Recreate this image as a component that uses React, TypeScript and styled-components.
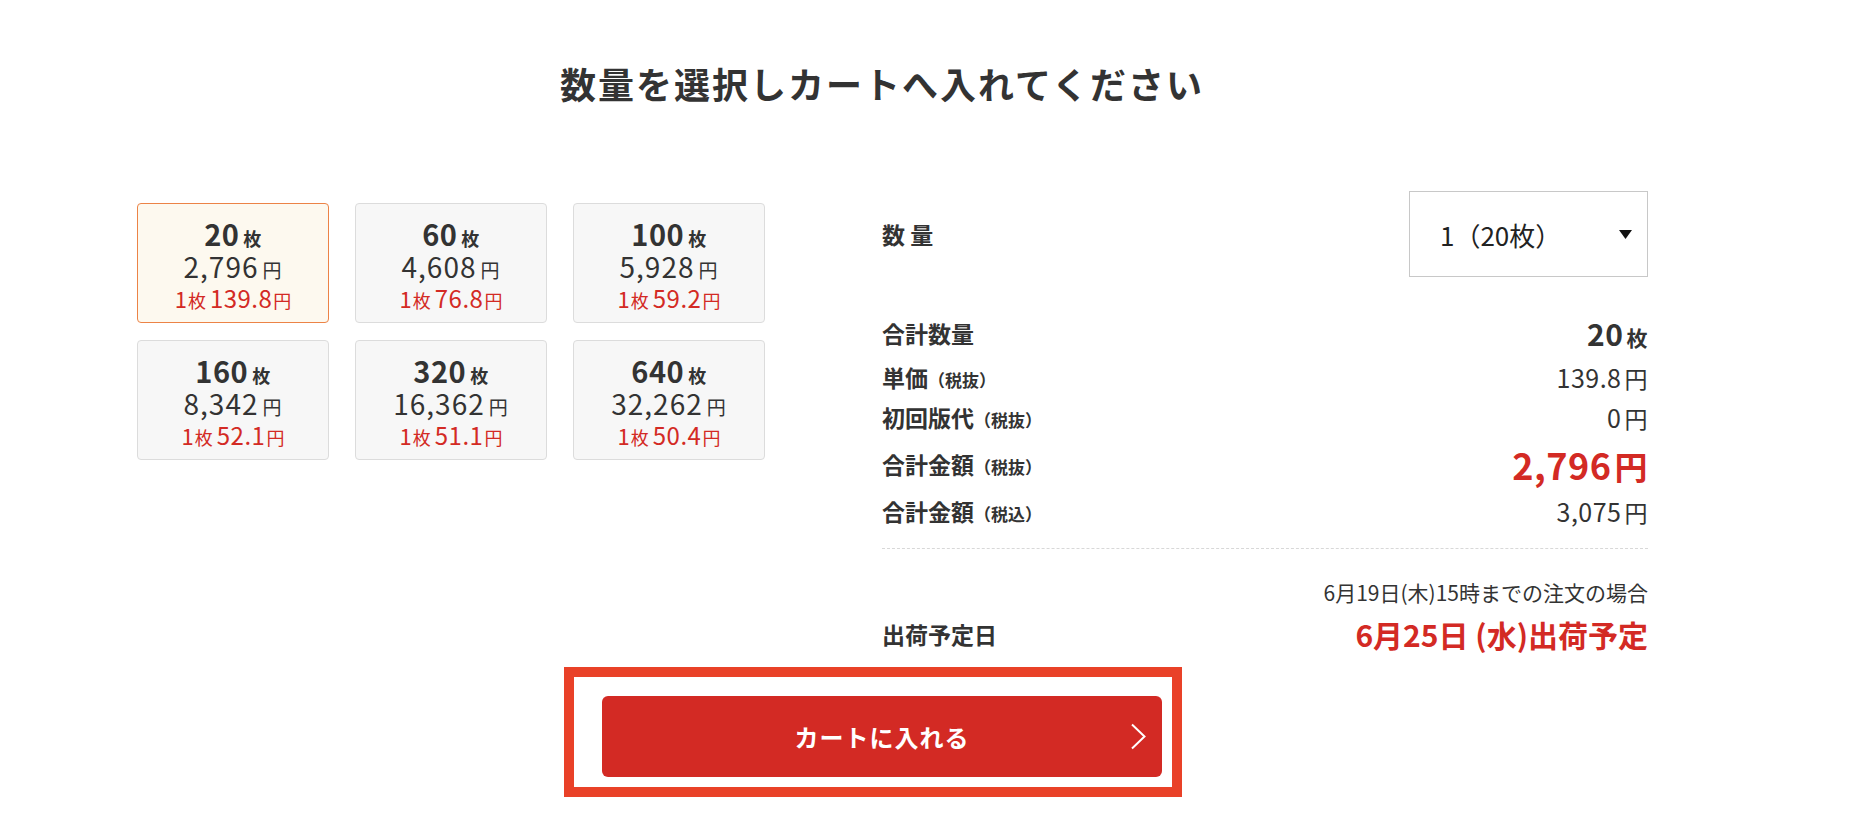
import React, { useState } from "react";
import styled, { createGlobalStyle } from "styled-components";

const GlobalStyle = createGlobalStyle`
  body {
    margin: 0;
    background: #fff;
    color: #333;
    font-family: "Noto Sans CJK JP", "Noto Sans", sans-serif;
  }
`;

const RED = "#d32a24";

const plans = [
  { qty: 20, price: 2796, unit: "139.8" },
  { qty: 60, price: 4608, unit: "76.8" },
  { qty: 100, price: 5928, unit: "59.2" },
  { qty: 160, price: 8342, unit: "52.1" },
  { qty: 320, price: 16362, unit: "51.1" },
  { qty: 640, price: 32262, unit: "50.4" },
];

const yen = (n: number) => n.toLocaleString("ja-JP");

export default function App() {
  const [selected, setSelected] = useState(0);
  const plan = plans[selected];
  const taxIn = Math.floor(plan.price * 1.1);

  return (
    <>
      <GlobalStyle />
      <Page>
        <Title>数量を選択しカートへ入れてください</Title>
        <Main>
          <PlanGrid>
            {plans.map((p, i) => (
              <PlanCard key={p.qty} $active={i === selected} onClick={() => setSelected(i)}>
                <PlanQty>
                  {p.qty}
                  <small>枚</small>
                </PlanQty>
                <PlanPrice>
                  {yen(p.price)}
                  <small>円</small>
                </PlanPrice>
                <PlanUnit>
                  1<small>枚</small>
                  <b>{p.unit}</b>
                  <small>円</small>
                </PlanUnit>
              </PlanCard>
            ))}
          </PlanGrid>

          <Summary>
            <QtyRow>
              <Label>数 量</Label>
              <SelectWrap>
                <QtySelect value={selected} onChange={(e) => setSelected(Number(e.target.value))}>
                  {plans.map((p, i) => (
                    <option key={p.qty} value={i}>
                      {`${i === 0 ? 1 : p.qty / 20}（${p.qty}枚）`}
                    </option>
                  ))}
                </QtySelect>
                <Caret width="13" height="9" viewBox="0 0 13 9">
                  <path d="M0 0h13L6.5 9z" fill="#111" />
                </Caret>
              </SelectWrap>
            </QtyRow>

            <Rows>
              <Row $h={44}>
                <Label>合計数量</Label>
                <Value $size={30} $bold>
                  {plan.qty}
                  <Unit $size={21}>枚</Unit>
                </Value>
              </Row>
              <Row $h={44}>
                <Label>
                  単価<Note>（税抜）</Note>
                </Label>
                <Value $size={25}>
                  {plan.unit}
                  <Unit $size={23}>円</Unit>
                </Value>
              </Row>
              <Row $h={36}>
                <Label>
                  初回版代<Note>（税抜）</Note>
                </Label>
                <Value $size={25}>
                  0<Unit $size={23}>円</Unit>
                </Value>
              </Row>
              <Row $h={58}>
                <Label>
                  合計金額<Note>（税抜）</Note>
                </Label>
                <Value $size={36} $bold $red>
                  {yen(plan.price)}
                  <Unit $size={33}>円</Unit>
                </Value>
              </Row>
              <Row $h={36}>
                <Label>
                  合計金額<Note>（税込）</Note>
                </Label>
                <Value $size={25}>
                  {yen(taxIn)}
                  <Unit $size={23}>円</Unit>
                </Value>
              </Row>
            </Rows>

            <Divider />

            <Deadline>6月19日(木)15時までの注文の場合</Deadline>
            <Row $h={44} $mt={6}>
              <Label>出荷予定日</Label>
              <ShipDate>6月25日 (水)出荷予定</ShipDate>
            </Row>
          </Summary>
        </Main>

        <CartArea>
          <Highlight>
            <CartButton type="button">
              カートに入れる
              <Chevron width="17" height="27" viewBox="0 0 17 27">
                <polyline points="2,1.5 14.5,13.5 2,25.5" fill="none" stroke="#fff" strokeWidth="2" />
              </Chevron>
            </CartButton>
          </Highlight>
        </CartArea>
      </Page>
    </>
  );
}

const Page = styled.div`
  width: 1532px;
  margin-left: 116px;
  padding-top: 58px;
`;

const Title = styled.h1`
  margin: 0;
  font-size: 36px;
  line-height: 50px;
  font-weight: 700;
  letter-spacing: 2px;
  text-align: center;
  color: #333;
`;

const Main = styled.div`
  display: flex;
  align-items: flex-start;
  gap: 117px;
  margin-top: 83px;
  padding-left: 21px;
`;

const PlanGrid = styled.div`
  display: grid;
  grid-template-columns: repeat(3, 192px);
  gap: 17px 26px;
  margin-top: 12px;
`;

const PlanCard = styled.div<{ $active: boolean }>`
  box-sizing: border-box;
  height: 120px;
  padding-top: 12px;
  display: flex;
  flex-direction: column;
  align-items: center;
  border-radius: 4px;
  border: 1px solid ${(p) => (p.$active ? "#ec8346" : "#dcdcdc")};
  background: ${(p) => (p.$active ? "#fdf9ef" : "#f7f7f7")};
  cursor: pointer;

  small {
    margin-left: 4px;
  }
`;

const PlanQty = styled.div`
  height: 34px;
  line-height: 34px;
  font-size: 29px;
  font-weight: 700;
  letter-spacing: 0.5px;
  color: #333;

  small {
    font-size: 18px;
  }
`;

const PlanPrice = styled.div`
  height: 32px;
  line-height: 32px;
  font-size: 28px;
  letter-spacing: 1px;
  color: #333;

  small {
    font-size: 19px;
  }
`;

const PlanUnit = styled.div`
  height: 32px;
  line-height: 32px;
  font-size: 22px;
  color: ${RED};

  small {
    font-size: 18px;
    margin-left: 1px;
  }

  b {
    font-weight: 400;
    font-size: 24px;
    letter-spacing: 0.5px;
    margin-left: 4px;
  }
`;

const Summary = styled.div`
  flex: 1;
  display: flex;
  flex-direction: column;
`;

const QtyRow = styled.div`
  display: flex;
  justify-content: space-between;
  align-items: center;
`;

const Label = styled.div`
  font-size: 23px;
  font-weight: 700;
  color: #333;
  white-space: pre;
`;

const Note = styled.span`
  font-size: 17px;
`;

const SelectWrap = styled.div`
  position: relative;
  width: 239px;
  height: 86px;
`;

const QtySelect = styled.select`
  appearance: none;
  box-sizing: border-box;
  width: 100%;
  height: 100%;
  padding: 0 0 0 30px;
  border: 1px solid #c8c8c8;
  border-radius: 0;
  background: #fff;
  font-family: "Noto Sans CJK JP", "Noto Sans", sans-serif;
  font-size: 26px;
  color: #222;
  outline: none;
`;

const Caret = styled.svg`
  position: absolute;
  right: 16px;
  top: 39px;
  pointer-events: none;
`;

const Rows = styled.div`
  margin-top: 34px;
`;

const Row = styled.div<{ $h: number; $mt?: number }>`
  display: flex;
  justify-content: space-between;
  align-items: center;
  height: ${(p) => p.$h}px;
  margin-top: ${(p) => p.$mt ?? 0}px;
`;

const Value = styled.div<{ $size: number; $bold?: boolean; $red?: boolean }>`
  font-size: ${(p) => p.$size}px;
  font-weight: ${(p) => (p.$bold ? 700 : 400)};
  color: ${(p) => (p.$red ? RED : "#333")};
  letter-spacing: 0.5px;
  line-height: 1;
`;

const Unit = styled.span<{ $size: number }>`
  font-size: ${(p) => p.$size}px;
  margin-left: 3px;
`;

const Divider = styled.div`
  margin-top: 19px;
  border-top: 1px dashed #d8d8d8;
`;

const Deadline = styled.div`
  margin-top: 29px;
  height: 28px;
  line-height: 28px;
  font-size: 21px;
  text-align: right;
  color: #333;
`;

const ShipDate = styled.div`
  font-size: 30px;
  font-weight: 700;
  color: ${RED};
`;

const CartArea = styled.div`
  display: flex;
  justify-content: center;
  margin-top: 11px;
`;

const Highlight = styled.div`
  margin-right: 18px;
  padding: 19px 10px 10px 28px;
  border: 10px solid #e94128;
`;

const CartButton = styled.button`
  position: relative;
  display: flex;
  align-items: center;
  justify-content: center;
  width: 560px;
  height: 81px;
  border: none;
  border-radius: 6px;
  background: ${RED};
  color: #fff;
  font-family: "Noto Sans CJK JP", "Noto Sans", sans-serif;
  font-size: 24px;
  font-weight: 700;
  letter-spacing: 1px;
  cursor: pointer;
`;

const Chevron = styled.svg`
  position: absolute;
  right: 15px;
  top: 27px;
`;
